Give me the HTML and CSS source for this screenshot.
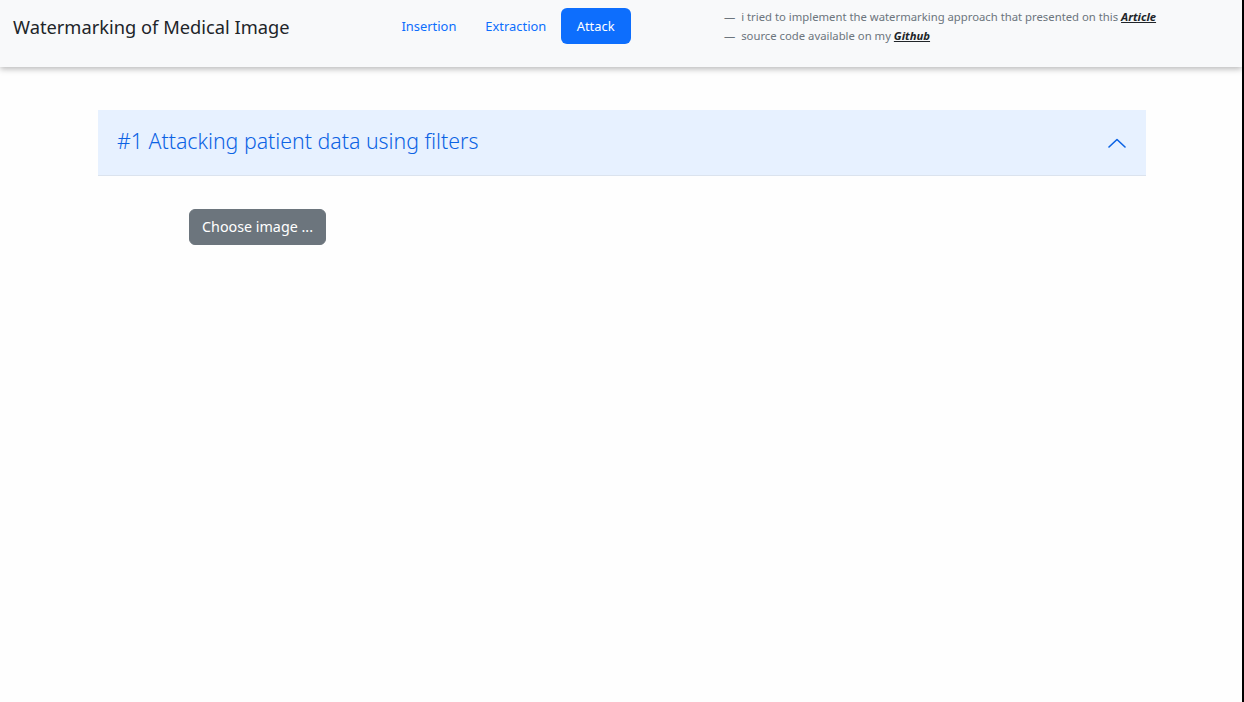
FILE: index.html
```html
<!DOCTYPE html>
<html lang="en">
<head>
<meta charset="utf-8">
<title>Watermarking of Medical Image</title>
<link rel="stylesheet" href="styles.css">
</head>
<body>
<div class="page">
  <header class="navbar">
    <a class="brand" href="#">Watermarking of Medical Image</a>
    <ul class="nav">
      <li><a class="nav-link" href="#">Insertion</a></li>
      <li><a class="nav-link" href="#">Extraction</a></li>
      <li><a class="nav-link active" href="#">Attack</a></li>
    </ul>
    <div class="info">
      <div class="info-line">— &nbsp;i tried to implement the watermarking approach that presented on this <a class="ref" href="#">Article</a></div>
      <div class="info-line">— &nbsp;source code available on my <a class="ref" href="#">Github</a></div>
    </div>
  </header>
  <main class="main">
    <section class="accordion">
      <div class="acc-header">
        <h3 class="acc-title">#1 Attacking patient data using filters</h3>
        <svg class="chevron" width="18" height="10" viewBox="0 0 18 10" aria-hidden="true"><path d="M1 9 L9 1.5 L17 9" fill="none" stroke="#0c63e4" stroke-width="1.6" stroke-linecap="round" stroke-linejoin="round"/></svg>
      </div>
      <div class="acc-body">
        <button class="btn-secondary" type="button">Choose image ...</button>
      </div>
    </section>
  </main>
</div>
</body>
</html>
```

FILE: styles.css
```css
html, body {
  margin: 0;
  padding: 0;
  height: 100%;
}
body {
  background: #fefefe;
  font-family: "Noto Sans", "Segoe UI", "Liberation Sans", sans-serif;
  color: #212529;
}
.page {
  min-height: 100vh;
  box-sizing: border-box;
  border-right: 2px solid #000;
}
.navbar {
  display: flex;
  align-items: flex-start;
  height: 67px;
  box-sizing: border-box;
  background: #f8f9fa;
  box-shadow: 0 2px 6px rgba(0, 0, 0, 0.28);
  padding-left: 13px;
  position: relative;
}
.brand {
  font-size: 18.3px;
  color: #212529;
  text-decoration: none;
  line-height: 27px;
  margin-top: 13px;
  width: 374px;
  white-space: nowrap;
}
.nav {
  list-style: none;
  margin: 8px 0 0 0;
  padding: 0;
  display: flex;
  width: 337px;
}
.nav-link {
  display: block;
  font-size: 12.9px;
  line-height: 20px;
  padding: 8px 14.5px;
  color: #0d6efd;
  text-decoration: none;
  border-radius: 6px;
}
.nav-link.active {
  background: #0d6efd;
  color: #fff;
  padding: 8px 16px;
}
.info {
  margin-top: 7px;
  font-size: 11.3px;
  line-height: 19px;
  color: #6c757d;
}
.info-line {
  white-space: nowrap;
}
.ref {
  color: #212529;
  font-weight: 700;
  font-style: italic;
  text-decoration: underline;
}
.main {
  padding: 43px 97px 0 98px;
}
.accordion {
  width: 1048px;
}
.acc-header {
  display: flex;
  align-items: center;
  justify-content: space-between;
  height: 66px;
  box-sizing: border-box;
  padding: 0 20px 4px 19px;
  background: #e7f1ff;
  border-bottom: 1px solid #dbe3ee;
}
.acc-title {
  margin: 0;
  font-size: 21.3px;
  font-weight: 300;
  color: #0c63e4;
  line-height: 30px;
}
.chevron {
  display: block;
  margin-top: 4px;
}
.acc-body {
  padding: 33px 0 0 91px;
}
.btn-secondary {
  font-family: inherit;
  font-size: 14.3px;
  line-height: 22px;
  padding: 6px 12px;
  color: #fff;
  background: #6c757d;
  border: 1px solid #6c757d;
  border-radius: 6px;
  min-width: 137px;
  height: 36px;
  box-sizing: border-box;
  cursor: pointer;
  white-space: nowrap;
}
```
